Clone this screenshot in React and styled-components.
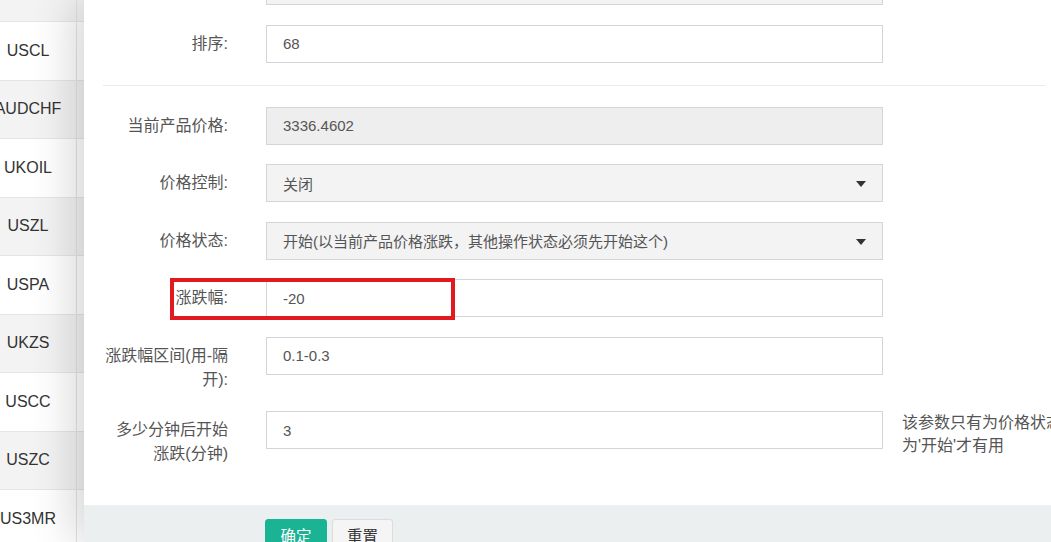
import React from "react";
import styled, { createGlobalStyle } from "styled-components";

const Global = createGlobalStyle`
  html, body {
    margin: 0;
    padding: 0;
    overflow: hidden;
    background: #fff;
  }
  body {
    font-family: "Liberation Sans", "Noto Sans CJK SC", sans-serif;
    color: #555;
  }
`;

const Page = styled.div`
  display: flex;
  width: 1051px;
  height: 542px;
  overflow: hidden;
`;

const Sidebar = styled.div`
  width: 84px;
  flex: none;
  overflow: hidden;
  display: flex;
  flex-direction: column;
  margin-top: -36.5px;
`;

const SideRow = styled.div`
  height: 58.5px;
  flex: none;
  display: flex;
  box-sizing: border-box;
  border-bottom: 1px solid #e6e6e6;
  background: ${(p) => (p.$odd ? "#f3f3f3" : "#fff")};
`;

const SideCell = styled.div`
  width: 96px;
  margin-left: -20px;
  flex: none;
  display: flex;
  align-items: center;
  justify-content: center;
  border-right: 1px solid #e4e4e4;
  font-size: 16px;
  color: #333;
`;

const Modal = styled.div`
  flex: 1;
  min-width: 0;
  display: flex;
  flex-direction: column;
  background: #fff;
  box-shadow: -12px 0 40px rgba(0, 0, 0, 0.16);
  overflow: hidden;
`;

const Body = styled.div`
  flex: 1;
  padding: 0 6px 0 19px;
  margin-top: -33px;
`;

const Row = styled.div`
  position: relative;
  display: grid;
  grid-template-columns: 144px 617px 162px;
  column-gap: 19px;
  margin-bottom: 19.5px;
`;

const Label = styled.label`
  width: 125px;
  padding-top: 7px;
  font-size: 16px;
  line-height: 24px;
  text-align: right;
  color: #555;
`;

const Field = styled.div`
  grid-column: 2;
  position: relative;
  height: 38px;
  box-sizing: border-box;
  border: 1px solid #d3d4dc;
  background: ${(p) => (p.$tone === "disabled" ? "#eeeeee" : p.$tone === "select" ? "#f3f3f3" : "#fff")};
  display: flex;
  align-items: center;
  padding: 0 16px;
  font-size: 15px;
  color: #555;
  ${(p) =>
    p.$tone === "select" &&
    `
    &::after {
      content: "";
      position: absolute;
      right: 16px;
      top: 16px;
      border-left: 5px solid transparent;
      border-right: 5px solid transparent;
      border-top: 6px solid #333;
    }
  `}
`;

const Help = styled.div`
  grid-column: 3;
  font-size: 16px;
  line-height: 23px;
  color: #555;
  padding-top: 0;
`;

const Divider = styled.hr`
  border: 0;
  border-top: 1px solid #eaeaea;
  margin: 22px 0 21px;
`;

const Mark = styled.div`
  position: absolute;
  left: 67px;
  top: -1px;
  width: 285px;
  height: 42px;
  box-sizing: border-box;
  border: 4px solid #e2191f;
  pointer-events: none;
`;

const Footer = styled.div`
  flex: none;
  height: 37px;
  box-sizing: border-box;
  background: #ecefef;
  display: flex;
  gap: 5px;
  padding: 14px 0 0 181px;
`;

const Button = styled.button`
  flex: none;
  width: ${(p) => (p.$primary ? "62px" : "61px")};
  height: 38px;
  box-sizing: border-box;
  border-radius: 3px;
  border: 1px solid ${(p) => (p.$primary ? "#1ab394" : "#dcdcdc")};
  background: ${(p) => (p.$primary ? "#1ab394" : "#f5f5f5")};
  color: ${(p) => (p.$primary ? "#fff" : "#333")};
  font-family: inherit;
  font-size: 15.5px;
  padding: 5px 0 0;
  display: flex;
  justify-content: center;
  align-items: flex-start;
  line-height: 24px;
`;

const symbols = ["", "USCL", "AUDCHF", "UKOIL", "USZL", "USPA", "UKZS", "USCC", "USZC", "US3MR"];

const fields = [
  { label: "", value: "", tone: "select" },
  { label: "排序:", value: "68" },
  { divider: true },
  { label: "当前产品价格:", value: "3336.4602", tone: "disabled" },
  { label: "价格控制:", value: "关闭", tone: "select" },
  { label: "价格状态:", value: "开始(以当前产品价格涨跌，其他操作状态必须先开始这个)", tone: "select" },
  { label: "涨跌幅:", value: "-20", mark: true },
  { label: "涨跌幅区间(用-隔开):", value: "0.1-0.3" },
  { label: "多少分钟后开始涨跌(分钟)", value: "3", help: "该参数只有为价格状态为'开始'才有用" },
];

const App = () => {
  return (
    <>
      <Global />
      <Page>
        <Sidebar>
          {symbols.map((s, i) => (
            <SideRow key={i} $odd={i % 2 === 0}>
              <SideCell>{s}</SideCell>
            </SideRow>
          ))}
        </Sidebar>
        <Modal>
          <Body>
            {fields.map((f, i) =>
              f.divider ? (
                <Divider key={i} />
              ) : (
                <Row key={i}>
                  <Label>{f.label}</Label>
                  <Field $tone={f.tone}>{f.value}</Field>
                  {f.help && <Help>{f.help}</Help>}
                  {f.mark && <Mark />}
                </Row>
              )
            )}
          </Body>
          <Footer>
            <Button $primary>确定</Button>
            <Button>重置</Button>
          </Footer>
        </Modal>
      </Page>
    </>
  );
};

export default App;
